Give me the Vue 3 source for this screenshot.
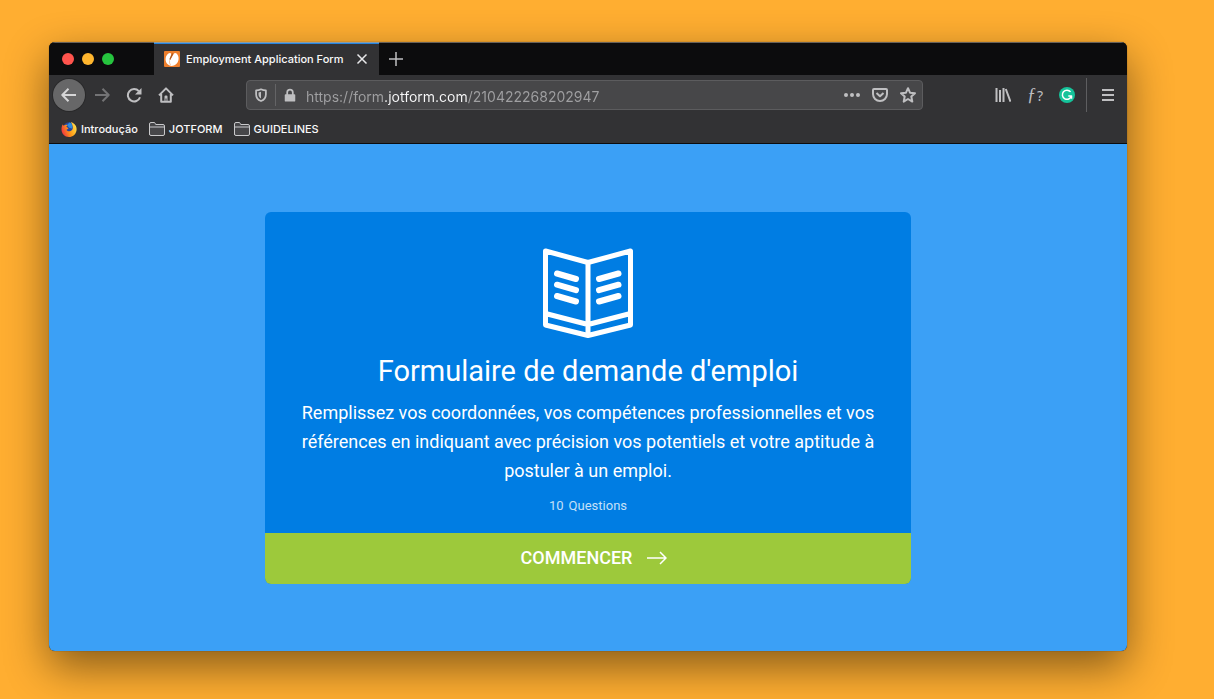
<script setup>
import { ref } from 'vue'

const url = ref('https://form.jotform.com/210422268202947')
const bookmarks = ['JOTFORM', 'GUIDELINES']
</script>

<template>
  <div class="desktop">
    <div class="window">
      <header class="tabs">
        <div class="lights">
          <button class="light red" aria-label="Close window"></button>
          <button class="light amber" aria-label="Minimise window"></button>
          <button class="light green" aria-label="Zoom window"></button>
        </div>
        <div class="tab">
          <svg class="favicon" viewBox="0 0 16 16" aria-hidden="true">
            <rect width="16" height="16" rx="1" fill="#ee7f2d" />
            <path d="M4 2.800C5.500 1.600 7 1.800 7.200 3L5.600 10L9.800 2.800C10.400 1.700 11.600 1.600 12.600 2.600C15.600 5.600 15.200 11 12 13.300C9.500 15.300 6 15.400 4 13.600C.8 11 .8 5.600 4 2.800Z" fill="#fff" />
            <path d="M5.800 8.500L8.800 2.500" stroke="#a8551f" stroke-width="1.200" />
            <path d="M5.600 9.500Q5 12 6.500 14" stroke="#f3b68a" stroke-width="0.800" />
          </svg>
          <span class="tab-title">Employment Application Form</span>
          <button class="icon-button close" aria-label="Close tab">
            <svg viewBox="0 0 16 16"><path d="M3.500 3.500L12.500 12.500M12.500 3.500L3.500 12.500" /></svg>
          </button>
        </div>
        <button class="icon-button new-tab" aria-label="New tab">
          <svg viewBox="0 0 16 16"><path d="M8 1V15M1 8H15" /></svg>
        </button>
      </header>

      <div class="toolbar">
        <nav class="nav">
          <button class="icon-button back" aria-label="Back">
            <svg viewBox="0 0 16 16"><path d="M15 8H1.500M7.500 1.800L1.300 8L7.500 14.200" /></svg>
          </button>
          <button class="icon-button forward" aria-label="Forward" disabled>
            <svg viewBox="0 0 16 16"><path d="M1 8H14.500M8.500 1.800L14.700 8L8.500 14.200" /></svg>
          </button>
          <button class="icon-button" aria-label="Reload">
            <svg viewBox="0 0 16 16">
              <path d="M12.800 4.200A6.200 6.200 0 1 0 14 10.200" />
              <path class="solid" d="M15.500 1V7.500H9Z" />
            </svg>
          </button>
          <button class="icon-button" aria-label="Home">
            <svg viewBox="0 0 16 16">
              <path d="M1 8.400L8 1.400L15 8.400M3.200 7V14.700H12.800V7" />
              <path class="solid" d="M6.500 14.500V9.600Q6.500 8.600 7.500 8.600H8.500Q9.500 8.600 9.500 9.600V14.500H8.500V11.500H7.500V14.500Z" />
            </svg>
          </button>
        </nav>

        <div class="address">
          <button class="icon-button small" aria-label="Tracking protection">
            <svg viewBox="0 0 16 16">
              <path d="M8 1.500C10 2.500 12 2.800 13.600 2.800V7C13.600 10.800 11.500 13.500 8 14.900C4.500 13.500 2.400 10.800 2.400 7V2.800C4 2.800 6 2.500 8 1.500Z" />
              <path class="solid" d="M8 4.300V12C6.200 11 5.200 9.300 5.200 7V5Z" />
            </svg>
          </button>
          <span class="divider"></span>
          <button class="icon-button small" aria-label="Site information">
            <svg viewBox="0 0 16 16">
              <rect class="solid" x="2" y="7" width="12" height="8.500" rx="1" />
              <path d="M4.800 8V5A3.200 3.200 0 0 1 11.200 5V8" />
            </svg>
          </button>
          <input v-model="url" class="url" type="text" aria-label="Address" spellcheck="false" />
          <div class="page-actions">
            <button class="icon-button" aria-label="Page actions">
              <svg viewBox="0 0 16 16"><circle class="solid" cx="2" cy="8" r="2" /><circle class="solid" cx="8" cy="8" r="2" /><circle class="solid" cx="14" cy="8" r="2" /></svg>
            </button>
            <button class="icon-button" aria-label="Save to Pocket">
              <svg viewBox="0 0 16 16">
                <path d="M2 2H14Q15 2 15 3V7A7 7 0 0 1 1 7V3Q1 2 2 2Z" />
                <path d="M4.500 6L8 9.300L11.500 6" />
              </svg>
            </button>
            <button class="icon-button" aria-label="Bookmark this page">
              <svg viewBox="0 0 16 16"><path d="M8 1.200L10 5.700L15 6.200L11.300 9.500L12.300 14.600L8 12L3.700 14.600L4.700 9.500L1 6.200L6 5.700Z" /></svg>
            </button>
          </div>
        </div>

        <div class="extras">
          <button class="icon-button" aria-label="Library">
            <svg viewBox="0 0 16 16"><path d="M1.500 1V15M5 3V15M8.500 1V15M10.800 2L15.500 14.700" /></svg>
          </button>
          <button class="font-button" aria-label="Identify font"><i>ƒ</i><span>?</span></button>
          <button class="icon-button" aria-label="Grammarly">
            <svg viewBox="0 0 16 16">
              <circle cx="8" cy="8" r="8" fill="#15c39a" stroke="none" />
              <path class="white" d="M11.600 4.900A4.600 4.600 0 1 0 12.400 9H9.300M12.500 8.700V11.800" />
            </svg>
          </button>
          <span class="menu-divider"></span>
          <button class="icon-button menu" aria-label="Menu">
            <svg viewBox="0 0 16 16"><path d="M2 3H14M2 8H14M2 13H14" /></svg>
          </button>
        </div>
      </div>

      <nav class="bookmarks" aria-label="Bookmarks">
        <a href="#" class="bookmark">
          <svg viewBox="0 0 16 16" aria-hidden="true">
            <defs>
              <linearGradient id="flame" x1="1" y1="0.300" x2="0" y2="0.700">
                <stop offset="0" stop-color="#ffe14a" />
                <stop offset="0.500" stop-color="#ff9a16" />
                <stop offset="1" stop-color="#f03044" />
              </linearGradient>
            </defs>
            <circle cx="8" cy="7" r="5.800" fill="#25459b" />
            <path d="M8.500 1.500C11 2 12 5 11 7.500L8 6.800L6 4Z" fill="#2b8be0" />
            <path d="M1.500 3.500L2.800 4.800C4 3.500 5.500 3.500 6.500 4.200L5.200 5.800L7.500 7.200C6.800 8.200 6 8.200 5.500 8.800C6.500 10.800 9.500 10.800 11 9C12.800 6.800 11.500 3.800 9.800 1C13.500 2.200 16 5.200 15.600 9C15 13.500 11.700 16 8 16C3.700 16 .500 12.500.500 8.500C.500 6.500.900 5 1.500 3.500Z" fill="url(#flame)" />
          </svg>
          <span>Introdução</span>
        </a>
        <a v-for="name in bookmarks" :key="name" href="#" class="bookmark">
          <svg viewBox="0 0 16 16" aria-hidden="true" class="folder">
            <path d="M.500 13.500V3Q.500 1.500 2 1.500H5Q6 1.500 6.300 2.500L6.700 3.500H14Q15.500 3.500 15.500 5V13Q15.500 14.500 14 14.500H2Q.500 14.500.500 13ZM.500 6H15.500" />
          </svg>
          <span>{{ name }}</span>
        </a>
      </nav>

      <main class="page">
        <section class="card">
          <div class="intro">
            <svg class="book" viewBox="0 0 90 90" aria-hidden="true">
              <path d="M2.500 3L45 14.500L87.500 3V77L45 87.500L2.500 77ZM45 14.500V87.500M2.500 65.500L45 76.500L87.500 65.500" />
              <path class="lines" d="M14 25.500L33 31M14 36.700L33 42.200M14 48L33 53.500M75.500 25.500L56 31M75.500 36.700L56 42.200M75.500 48L56 53.500" />
            </svg>
            <h1>Formulaire de demande d'emploi</h1>
            <p class="description">Remplissez vos coordonnées, vos compétences professionnelles et vos références en indiquant avec précision vos potentiels et votre aptitude à postuler à un emploi.</p>
            <p class="count"><span>10</span><span>Questions</span></p>
          </div>
          <button class="start">
            <span>COMMENCER</span>
            <svg viewBox="0 0 20 14" aria-hidden="true"><path d="M0 7H19M13 1L19 7L13 13" /></svg>
          </button>
        </section>
      </main>
    </div>
  </div>
</template>

<style>
body {
  background: #ffae31;
}
</style>

<style scoped>
* {
  box-sizing: border-box;
}
.desktop {
  display: flex;
  min-height: 100vh;
  padding: 42px 87px 48px 49px;
  background: #ffae31;
  overflow: hidden;
  font-family: Inter, "Liberation Sans", sans-serif;
}
.window {
  flex: 1;
  display: flex;
  flex-direction: column;
  min-width: 0;
  border-radius: 6px;
  overflow: hidden;
  background: #323234;
  box-shadow: 0 0 1px rgba(0, 0, 0, 0.6), 0 16px 44px rgba(0, 0, 0, 0.48);
}
button {
  padding: 0;
  border: 0;
  background: none;
  font: inherit;
  cursor: pointer;
}
a {
  color: inherit;
  text-decoration: none;
}
svg {
  display: block;
  fill: none;
}
.tabs {
  display: flex;
  height: 33px;
  padding-top: 1px;
  background: #0c0c0d;
  box-shadow: inset 0 1px #68625a;
}
.lights {
  display: flex;
  align-items: center;
  gap: 8px;
  width: 105px;
  padding-left: 13px;
}
.light {
  width: 12px;
  height: 12px;
  border-radius: 50%;
}
.red { background: #ff544d; }
.amber { background: #ffb62e; }
.green { background: #26c43e; }
.tab {
  display: flex;
  align-items: center;
  width: 225px;
  padding: 0 9px 0 10px;
  background: #323234;
  box-shadow: inset 0 1px #2484e0, 0 -1px #8b9da8;
  color: #f9f9fa;
}
.favicon {
  width: 16px;
  height: 16px;
}
.tab-title {
  flex: 1;
  margin-left: 6px;
  font-size: 11px;
  font-weight: 500;
  white-space: nowrap;
}
.icon-button {
  display: grid;
  place-items: center;
  width: 32px;
  height: 32px;
  color: #bfbfc1;
}
.icon-button svg {
  width: 16px;
  height: 16px;
  stroke: currentColor;
  stroke-width: 2;
  stroke-linejoin: round;
}
.icon-button .solid {
  fill: currentColor;
  stroke: none;
}
.icon-button .white {
  stroke: #fff;
  stroke-width: 1.500;
}
.icon-button.close {
  width: 16px;
  color: #e8e8ea;
}
.icon-button.close svg,
.icon-button.new-tab svg {
  stroke-width: 1.500;
}
.new-tab {
  margin-left: 1px;
}
.toolbar {
  display: flex;
  align-items: center;
  height: 40px;
  padding: 0 3px 0 4px;
}
.nav,
.extras,
.page-actions {
  display: flex;
  align-items: center;
}
.nav .back {
  border-radius: 50%;
  background: #676768;
  box-shadow: 0 0 0 1px #29292a;
  color: #d6d6d7;
}
.nav .forward {
  margin-left: 1px;
  color: #737375;
}
.address {
  flex: 1;
  display: flex;
  align-items: center;
  min-width: 0;
  height: 30px;
  margin: 0 64px;
  border: 1px solid #5c5c5e;
  border-radius: 4px;
  background: #474749;
}
.icon-button.small {
  width: 28px;
  height: 28px;
}
.divider {
  width: 1px;
  height: 22px;
  background: #646466;
}
.icon-button.small svg {
  width: 14px;
  height: 14px;
}
.url {
  flex: 1;
  min-width: 0;
  height: 28px;
  padding: 2px 0 0;
  margin-left: 2px;
  border: 0;
  outline: 0;
  background: linear-gradient(90deg, #a0a0a2 79px, #f9f9fa 79px, #f9f9fa 161px, #a0a0a2 161px);
  background-clip: text;
  color: transparent;
  caret-color: #f9f9fa;
  font: 400 14px Inter, "Liberation Sans", sans-serif;
}
.page-actions .icon-button {
  width: 28px;
  height: 28px;
}
.font-button {
  display: flex;
  align-items: baseline;
  justify-content: center;
  gap: 1px;
  width: 32px;
  color: #bfbfc1;
  font-family: "Liberation Serif", serif;
  font-size: 18px;
  line-height: 22px;
}
.font-button span {
  font-family: "Noto Sans", sans-serif;
  font-size: 14px;
}
.menu-divider {
  width: 1px;
  height: 34px;
  margin: 0 5px 0 3px;
  background: #5e5e60;
}
.bookmarks {
  display: flex;
  align-items: center;
  gap: 11px;
  height: 29px;
  padding: 0 12px;
  border-bottom: 1px solid #0c0c0d;
  color: #f9f9fa;
  font-size: 11px;
  font-weight: 500;
}
.bookmark {
  display: flex;
  align-items: center;
  gap: 4px;
}
.bookmark svg {
  width: 16px;
  height: 16px;
}
.bookmark .folder {
  stroke: #c9c9cb;
  fill: #47474a;
}
.page {
  flex: 1;
  display: grid;
  place-items: center;
  padding: 24px;
  background: #3ba0f6;
  font-family: Roboto, "Liberation Sans", sans-serif;
}
.card {
  width: 100%;
  max-width: 646px;
  border-radius: 6px;
  overflow: hidden;
  background: #007de3;
  color: #fff;
  text-align: center;
}
.intro {
  display: flex;
  flex-direction: column;
  align-items: center;
  padding: 36px 32px 19px;
}
.book {
  width: 90px;
  height: 90px;
  stroke: #fff;
  stroke-width: 5;
  stroke-linejoin: round;
}
.book .lines {
  stroke-width: 6;
  stroke-linecap: round;
}
h1 {
  margin: 15px 0 9px;
  font-size: 29px;
  line-height: 36px;
  font-weight: 400;
}
.description {
  margin: 0;
  font-size: 18px;
  line-height: 29px;
}
.count {
  display: flex;
  gap: 5px;
  margin: 13px 0 0;
  font-size: 13px;
  line-height: 16px;
  color: #c5e0f8;
}
.start {
  display: flex;
  align-items: center;
  justify-content: center;
  gap: 15px;
  width: 100%;
  height: 51px;
  padding: 0 0 1px 12px;
  background: #9dc93b;
  color: #fff;
  font-size: 18px;
  font-weight: 500;
}
.start svg {
  width: 20px;
  height: 14px;
  stroke: #fff;
  stroke-width: 1.500;
}
</style>
